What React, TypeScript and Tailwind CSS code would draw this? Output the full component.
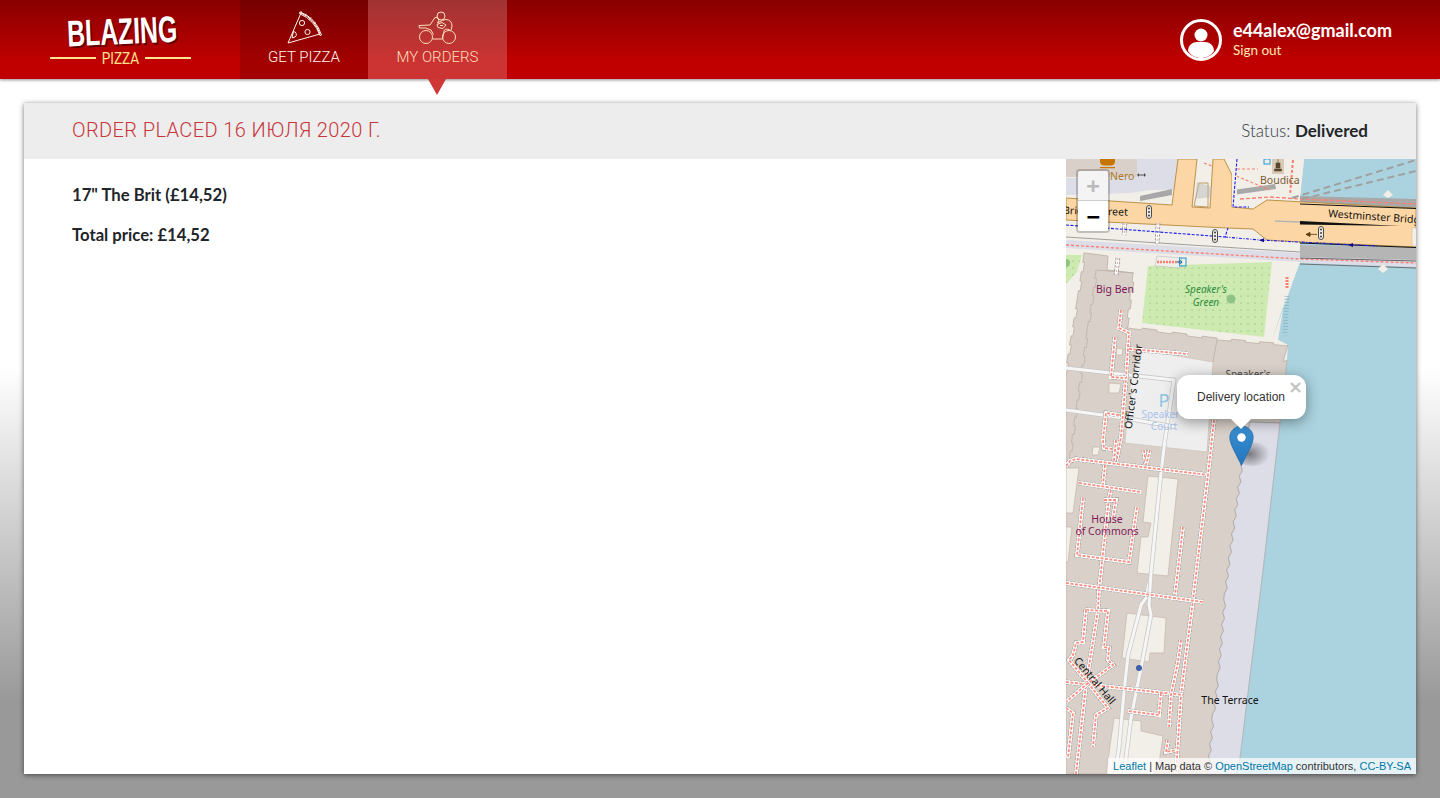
import React from "react";

type P = [number, number];

const pts = (a: P[]) => a.map((p) => p.join(",")).join(" ");

// a line broken into small bumps, as the traced outline of a wall
function bumpy(a: P[], step = 9, amp = 1.6, square = false): P[] {
  const out: P[] = [];
  for (let i = 0; i < a.length - 1; i++) {
    const [x1, y1] = a[i];
    const [x2, y2] = a[i + 1];
    const len = Math.hypot(x2 - x1, y2 - y1);
    const n = Math.max(1, Math.round(len / step));
    const nx = -(y2 - y1) / len;
    const ny = (x2 - x1) / len;
    for (let k = 0; k < n; k++) {
      const t = k / n;
      const t2 = (k + 1) / n;
      const o = k % 2 === 0 ? amp : -amp;
      out.push([x1 + (x2 - x1) * t + nx * o, y1 + (y2 - y1) * t + ny * o]);
      if (square) out.push([x1 + (x2 - x1) * t2 + nx * o, y1 + (y2 - y1) * t2 + ny * o]);
    }
  }
  out.push(a[a.length - 1]);
  return out;
}

const footways: P[][] = [
  [[1121, 310], [1119, 328], [1129, 333], [1126, 377], [1121, 437], [1116, 463]],
  [[1129, 349], [1188, 354]],
  [[1115, 337], [1111, 377], [1126, 378]],
  [[1119, 415], [1106, 413], [1103, 440], [1104, 448], [1112, 449]],
  [[1116, 440], [1114, 461]],
  [[1066, 466], [1070, 461], [1076, 459], [1208, 475]],
  [[1214, 420], [1208, 475], [1193, 600], [1181, 695], [1176, 774]],
  [[1105, 465], [1103, 485]],
  [[1079, 483], [1141, 492]],
  [[1111, 490], [1109, 498], [1099, 590], [1098, 610], [1086, 685], [1076, 774]],
  [[1083, 498], [1077, 555], [1129, 562], [1137, 507]],
  [[1104, 500], [1116, 500], [1113, 518]],
  [[1066, 583], [1203, 602]],
  [[1183, 527], [1175, 595]],
  [[1144, 450], [1146, 465]],
  [[1150, 450], [1146, 465]],
  [[1086, 610], [1108, 611], [1104, 647], [1109, 648], [1108, 660], [1113, 665], [1088, 683]],
  [[1086, 610], [1083, 642], [1076, 643], [1073, 655], [1069, 660], [1088, 683]],
  [[1066, 682], [1183, 695]],
  [[1088, 683], [1108, 708], [1096, 715], [1093, 747]],
  [[1088, 683], [1066, 702]],
  [[1066, 708], [1073, 713], [1068, 758]],
  [[1161, 693], [1159, 715], [1128, 711]],
  [[1181, 640], [1178, 662], [1171, 695], [1169, 727]],
  [[1168, 740], [1166, 752], [1176, 750]],
];

const service: P[][] = [
  [[1125, 223], [1124, 235]],
  [[1158, 223], [1157, 245]],
  [[1118, 258], [1116, 275]],
];

const corridors: P[][] = [
  [[1165, 440], [1161, 473], [1151, 573], [1146, 598], [1141, 605], [1128, 655], [1124, 692], [1119, 748], [1115, 774]],
  [[1151, 573], [1149, 605], [1151, 615], [1141, 668], [1131, 718], [1126, 758], [1124, 774]],
  [[1066, 368], [1174, 380], [1165, 440]],
  [[1066, 410], [1124, 418], [1176, 427]],
];

const courts: P[][] = [
  [[1148, 476], [1178, 479], [1168, 576], [1137, 573], [1141, 537], [1148, 537], [1151, 523], [1143, 522]],
  [[1066, 468], [1079, 468], [1073, 513], [1066, 513]],
  [[1066, 527], [1072, 527], [1068, 562], [1066, 562]],
  [[1093, 447], [1100, 447], [1098, 455], [1092, 455]],
  [[1109, 383], [1121, 384], [1119, 393], [1109, 393]],
  [[1117, 348], [1123, 349], [1122, 355], [1116, 355]],
  [[1127, 613], [1166, 618], [1164, 653], [1150, 653], [1149, 662], [1122, 658]],
  [[1114, 718], [1141, 721], [1141, 731], [1163, 736], [1159, 763], [1155, 774], [1106, 774]],
];

function Lights({ x, y }: { x: number; y: number }) {
  return (
    <g>
      <rect x={x - 2.5} y={y - 6.5} width="5" height="13" rx="2.5" fill="#f2efe9" stroke="#4a4a4a" strokeWidth="1" />
      <circle cx={x} cy={y - 3.5} r="1.1" fill="#4a4a4a" />
      <circle cx={x} cy={y} r="1.1" fill="#4a4a4a" />
      <circle cx={x} cy={y + 3.5} r="1.1" fill="#4a4a4a" />
    </g>
  );
}

function MapDrawing() {
  const wall: P[] = bumpy([[1242, 465], [1236, 510], [1228, 570], [1225, 600], [1218, 680], [1213, 720], [1208, 774]], 6, 1.2);
  const north: P[] = bumpy([[1127, 327], [1217, 339], [1288, 345]], 14, 0.9, true);
  const west: P[] = bumpy([[1085, 253], [1078, 300], [1066, 372]], 9, 0.9, true);
  const wing: P[] = bumpy([[1134, 273], [1127, 327]], 9, 0.9, true);
  const inner: P[] = bumpy([[1097, 270], [1088, 330], [1078, 400], [1070, 460]], 9, 0.9, true);
  const sans = "'Noto Sans', 'DejaVu Sans', sans-serif";
  return (
    <svg className="block w-full h-full" viewBox="1066 159 350 615" preserveAspectRatio="none">
      <defs>
        <pattern id="lawn" width="7" height="7" patternUnits="userSpaceOnUse">
          <rect width="7" height="7" fill="#cdebb0" />
          <circle cx="2" cy="2" r="0.5" fill="#5f9a5a" />
        </pattern>
      </defs>
      <rect x="1066" y="159" width="350" height="615" fill="#f2efe9" />

      {/* river */}
      <polygon
        fill="#aad3df"
        points={pts([[1304, 159], [1416, 159], [1416, 774], [1236, 774], [1240, 758], [1263, 570], [1280, 423], [1287, 360], [1288, 345], [1273, 337], [1287, 295], [1300, 262], [1300, 197]])}
      />
      <polygon fill="#f2efe9" points={pts([[1300, 262], [1291, 262], [1278, 340], [1272, 340]])} />

      {/* lawns */}
      <polygon fill="url(#lawn)" points={pts([[1148, 266], [1272, 262], [1264, 337], [1142, 323]])} />
      <polygon fill="url(#lawn)" points={pts([[1066, 255], [1082, 255], [1077, 272], [1066, 284]])} />
      <circle cx="1231" cy="299" r="4.5" fill="#8fc486" />
      <circle cx="1066" cy="263" r="4" fill="#8fc486" />

      {/* palace */}
      <polygon
        fill="#d9d0c9"
        stroke="#bcaea3"
        strokeWidth="0.8"
        points={pts([
          [1085, 253], [1108, 256], [1107, 270], ...wing, ...north, [1283, 362], [1287, 360], [1280, 423], [1250, 422], ...wall, [1066, 774], [1066, 372], ...west.slice().reverse(),
        ])}
      />
      <polyline points={pts([[1097, 270], [1134, 273]])} fill="none" stroke="#bcaea3" strokeWidth="0.8" />
      <polyline points={pts(inner)} fill="none" stroke="#bcaea3" strokeWidth="0.7" />
      <polyline points="1217,340 1213,362" fill="none" stroke="#bcaea3" strokeWidth="0.8" />
      {/* embankment */}
      <polygon fill="#dddde8" stroke="#9a9a9a" strokeWidth="0.6" points={pts([[1250, 422], [1280, 423], [1263, 570], [1240, 758], [1236, 774], [1208, 774], ...wall.slice().reverse()])} />
      <polygon fill="#eeeeee" stroke="#c9bdb2" strokeWidth="0.6" points={pts([[1143, 350], [1213, 362], [1207, 452], [1125, 443], [1131, 375]])} />
      {courts.map((c, i) => (
        <polygon key={i} fill="#f2efe9" stroke="#c4b6ab" strokeWidth="0.7" points={pts(c)} />
      ))}
      {corridors.map((c, i) => (
        <g key={i} fill="none">
          <polyline points={pts(c)} stroke="#c6c6c6" strokeWidth="4.4" />
          <polyline points={pts(c)} stroke="#f6f6f6" strokeWidth="3" />
        </g>
      ))}
      {footways.map((c, i) => (
        <g key={i} fill="none">
          <polyline points={pts(c)} stroke="#8a8a8a" strokeWidth="4.800" strokeDasharray="2.500 1.200" />
          <polyline points={pts(c)} stroke="#ffffff" strokeWidth="3.800" />
          <polyline points={pts(c)} stroke="#fb8d80" strokeWidth="1.800" strokeDasharray="3 1.500" />
        </g>
      ))}

      {/* north of the bridge */}
      <rect x="1066" y="159" width="71" height="18" fill="#d9d0c9" />
      <polygon fill="#dddde8" points={pts([[1137, 159], [1180, 159], [1176, 190], [1150, 190], [1130, 193], [1066, 195], [1066, 178], [1137, 177]])} />
      <polygon fill="#f2efe9" points={pts([[1237, 159], [1304, 159], [1300, 197], [1267, 200], [1253, 209], [1233, 207]])} />
      <polygon fill="#a8a8a8" points={pts([[1140, 196], [1172, 189], [1172, 195], [1140, 201]])} />
      <polygon fill="#a8a8a8" points={pts([[1233, 190], [1275, 184], [1276, 189], [1233, 195]])} />
      <polygon fill="#a8a8a8" points={pts([[1300, 196], [1416, 199], [1416, 208], [1300, 203]])} />
      <polyline points="1240,199 1270,197 1300,199 1416,204" fill="none" stroke="#fa8072" strokeWidth="1.4" strokeDasharray="4 2" />
      <polyline points="1292,198 1416,160" fill="none" stroke="#a0a0a0" strokeWidth="2" strokeDasharray="7 4" />
      <polyline points="1302,199 1416,171" fill="none" stroke="#a0a0a0" strokeWidth="2" strokeDasharray="7 4" />
      <polyline points="1204,163 1222,170 1270,190" fill="none" stroke="#fa8072" strokeWidth="1.2" strokeDasharray="3 2" />
      <polyline points="1293,160 1290,195" fill="none" stroke="#fa8072" strokeWidth="2" strokeDasharray="3 2" />
      <polyline points="1237,169 1258,169" fill="none" stroke="#fa8072" strokeWidth="1.2" strokeDasharray="3 2" />
      <polygon fill="#f2efe9" points={pts([[1388, 190], [1393, 195], [1388, 198], [1383, 195]])} />

      {/* below the road: pavement and rail */}
      <polygon fill="#dddde8" points={pts([[1066, 240], [1300, 253], [1300, 262], [1066, 248]])} />
      <polygon fill="#dddde8" points={pts([[1300, 255], [1416, 258], [1416, 267], [1300, 263]])} />
      <polygon fill="#b5b5b5" points={pts([[1300, 245], [1416, 247], [1416, 260], [1300, 257]])} />
      <polyline points="1066,237 1300,252" fill="none" stroke="#8a8a8a" strokeWidth="0.8" />
      <polyline points="1066,245 1300,259 1416,263" fill="none" stroke="#fa8072" strokeWidth="1.400" strokeDasharray="3 2" />
      <polyline points="1300,258 1416,261" fill="none" stroke="#444" strokeWidth="0.8" />
      <polyline points="1300,264 1416,268" fill="none" stroke="#6f6f6f" strokeWidth="1" />
      <polygon points="1157,256 1182,258 1181,268 1155,266" fill="#f2efe9" stroke="#bbb" strokeWidth="0.6" />
      <polyline points="1157,262 1180,262" fill="none" stroke="#fa8072" strokeWidth="2.600" strokeDasharray="2 1" />
      <rect x="1179.5" y="258" width="6.5" height="8" fill="none" stroke="#1d9ad6" strokeWidth="1" />
      <path d="M1177 262h5m-2-1.8l2 1.8-2 1.8" fill="none" stroke="#0f78a8" strokeWidth="1" />
      <polygon fill="#f2efe9" points={pts([[1383, 264], [1388, 269], [1383, 273], [1378, 269]])} />
      <polyline points="1287,277 1287,288" stroke="#fa8072" strokeWidth="3" strokeDasharray="2 1" />
      <polyline points="1287,296 1285,335" stroke="#7fa9b6" strokeWidth="5" strokeDasharray="1 2" opacity="0.6" />

      {/* road */}
      <polygon
        fill="#fcd6a4"
        stroke="#b4893c"
        strokeWidth="0.9"
        points={pts([
          [1066, 198], [1172, 205], [1178, 159], [1197, 159], [1192, 207], [1210, 208], [1213, 159], [1224, 159], [1232, 175], [1232, 207], [1253, 209], [1267, 200], [1416, 208], [1416, 247], [1300, 242], [1267, 240], [1253, 229], [1227, 228], [1066, 220],
        ])}
      />
      <polyline points="1300,204 1416,208.500" fill="none" stroke="#111" strokeWidth="1" />
      <polyline points="1300,243 1416,247.500" fill="none" stroke="#111" strokeWidth="1" />
      <polygon fill="#f2efe9" stroke="#b4893c" strokeWidth="0.8" points={pts([[1199, 183], [1208, 183], [1208, 207], [1194, 206]])} />
      <polygon fill="#b5b5b5" points={pts([[1197, 182], [1212, 187], [1211, 197], [1195, 199]])} opacity="0.45" />
      <polygon fill="#f2efe9" points={pts([[1232, 159], [1237, 159], [1237, 207], [1232, 207]])} />
      {service.map((c, i) => (
        <g key={i} fill="none">
          <polyline points={pts(c)} stroke="#8a8a8a" strokeWidth="4.500" strokeDasharray="2.500 1.200" />
          <polyline points={pts(c)} stroke="#ffffff" strokeWidth="3" />
          <polyline points={pts(c)} stroke="#e2b5ae" strokeWidth="1.200" strokeDasharray="2 2" />
        </g>
      ))}
      <polyline points="1237,159 1233,207 1249,207" fill="none" stroke="#1c1cf0" strokeWidth="1.100" strokeDasharray="3 1.5" />
      <polyline points="1066,225 1225,237 1228,228" fill="none" stroke="#1c1cf0" strokeWidth="1.100" strokeDasharray="3 1.5" />
      <polyline points="1225,237 1260,240 1377,246" fill="none" stroke="#1c1cf0" strokeWidth="1.100" strokeDasharray="3 1.5 1 1.5" />
      <path d="M1259 240.2l5-2v4zM1348 245l5-2v4z" fill="#0c0c8c" />
      <polygon points="1300,221 1400,226 1300,224.500" fill="#111" />
      <polyline points="1275,221 1300,222" stroke="#b5b5b5" strokeWidth="1.3" />
      <Lights x={1149} y={212} />
      <Lights x={1215} y={236} />
      <Lights x={1321} y={233} />
      <path d="M1306 234.4h11m-11 0l4-2v4z" fill="#5a3a10" stroke="#5a3a10" strokeWidth="0.8" />
      <rect x="1412" y="228" width="6" height="18" rx="1" fill="#f2efe9" stroke="#c9b08a" strokeWidth="0.5" />

      {/* points of interest */}
      <path d="M1100 159h15v3c0 2-2 3.400-4 3.400h-7c-2 0-4-1.400-4-3.400zM1100 167h15v1.200h-15z" fill="#c77400" />
      <rect x="1272" y="159" width="12" height="15" fill="#d8cab5" />
      <path d="M1278 159v4m-2 0h4v5h-4zm-1.500 6h7v2h-7z" fill="#5a4630" stroke="#5a4630" strokeWidth="0.6" />
      <path d="M1137 175h9m-7.500-1.500v3m6-3v3" stroke="#333" strokeWidth="0.8" />
      <rect x="1264" y="159" width="6" height="5" fill="#f2efe9" stroke="#1d9ad6" strokeWidth="1" />

      {/* labels */}
      <g fontFamily={sans} fontSize="10.500">
        <text x="1110" y="180" fill="#ac7a24">Nero</text>
        <text x="1260" y="184" fill="#7a5c34">Boudica</text>
        <text x="1096" y="293" fill="#7e1a58">Big Ben</text>
        <text x="1206" y="293" fill="#2c8c3c" fontStyle="italic" textAnchor="middle" fontSize="10">Speaker's</text>
        <text x="1206" y="306" fill="#2c8c3c" fontStyle="italic" textAnchor="middle" fontSize="10">Green</text>
        <text x="1164" y="407" fill="#8dc5e3" textAnchor="middle" fontSize="18">P</text>
        <text x="1164" y="418" fill="#a8c4ec" textAnchor="middle" fontSize="10">Speaker's</text>
        <text x="1164" y="430" fill="#a8c4ec" textAnchor="middle" fontSize="10">Court</text>
        <text x="1248" y="378" fill="#4a4a4a" textAnchor="middle" fontSize="10">Speaker's</text>
        <text x="1107" y="523" fill="#7e1a58" textAnchor="middle">House</text>
        <text x="1107" y="535" fill="#7e1a58" textAnchor="middle">of Commons</text>
        <text x="1230" y="704" fill="#111" textAnchor="middle">The Terrace</text>
        <text fill="#111" transform="translate(1063 214) rotate(1.500)">Bridge Street</text>
        <text fill="#111" transform="translate(1328 217) rotate(4)">Westminster Bridge</text>
        <text fill="#111" textAnchor="middle" transform="translate(1137 387) rotate(-83)">Officer's Corridor</text>
        <text fill="#111" textAnchor="middle" transform="translate(1092 683) rotate(50)">Central Hall</text>
      </g>
      <circle cx="1139" cy="668" r="3" fill="#3f5ea8" />
    </svg>
  );
}

function PizzaIcon() {
  return (
    <svg width="36" height="36" viewBox="0 0 36 36" fill="none" stroke="currentColor" strokeWidth="1" strokeLinejoin="round">
      <path d="M2 33 L15 3 Q29 9 34 24 Z" />
      <path d="M14 1.800 Q30 8 35.500 25 L34 25.500 Q28.500 10 13.400 3.500 Z" />
      <path d="M15.500 1.500 L15 3.500 M20 3.800 L19 6 M25 7.500 L23.500 9.500 M29.500 12.500 L28 14 M33 18 L31 19.200" />
      <circle cx="16" cy="13" r="2.600" />
      <circle cx="21.500" cy="22" r="2.600" />
      <path d="M7.500 21.500 A3 3 0 0 1 9 27 L6 27.800 Z" />
    </svg>
  );
}

function BikeIcon() {
  return (
    <svg width="40" height="36" viewBox="0 0 40 36" fill="none" stroke="currentColor" strokeWidth="1">
      <circle cx="8" cy="27" r="6.500" />
      <circle cx="31" cy="27" r="6.500" />
      <circle cx="23" cy="6" r="4" />
      <path d="M14.500 29h10" />
      <path d="M1.500 18 L1 15.500 L12 15 L17 7.500 Q19 6 21 10 L19.500 13 Q25 9.500 28 9.500 Q34 10 34 16 L33 20.500" />
      <path d="M1.500 18 Q8 17 13 20 L15.500 24.500 M24.500 29 L26 21 Q26.500 18 32 20" />
      <path d="M19 14.500l5-2 4 2.500-3 3.500-5-1z" />
      <path d="M22 15.500h3" />
    </svg>
  );
}

function UserIcon() {
  return (
    <svg width="44" height="44" viewBox="0 0 44 44">
      <circle cx="22" cy="22" r="19.500" fill="none" stroke="#ffffff" strokeWidth="3" />
      <circle cx="22" cy="17" r="6.500" fill="#ffffff" />
      <path d="M9 33 C9 27 14 24 18 24 H26 C30 24 35 27 35 33 C31.500 38 27 40 22 40 C17 40 12.500 38 9 33Z" fill="#ffffff" />
    </svg>
  );
}

const ui = "font-['Lato','Noto_Sans',sans-serif]";

export default function App() {
  return (
    <div className={`h-screen min-h-[798px] flex flex-col bg-[linear-gradient(to_bottom,#ffffff_46%,#999999_88%)] ${ui}`}>
      <header className="relative z-10 h-[79px] flex bg-[linear-gradient(to_bottom,#8a0000,#c00000_78%)] shadow-[0_1px_3px_rgba(0,0,0,0.45)]">
        <div className="w-[240px] flex flex-col items-center pt-[14px]">
          <div className="-rotate-[2.5deg] translate-x-[2px] scale-x-[0.67] font-['Liberation_Sans',sans-serif] font-bold text-[37px] leading-[36px] whitespace-nowrap text-white [text-shadow:2px_2px_0_rgba(70,0,0,0.75)]">
            BLAZING
          </div>
          <div className="flex items-center gap-[5px] mt-[-1px] text-[#ffe38f]">
            <span className="w-[46px] h-[2px] bg-[#ffe38f]" />
            <span className="w-[39px] flex justify-center">
              <span className="inline-block scale-x-[0.8] font-['Roboto',sans-serif] text-[17px] leading-[18px]">PIZZA</span>
            </span>
            <span className="w-[46px] h-[2px] bg-[#ffe38f]" />
          </div>
        </div>
        <nav className="flex">
          <a className="w-[128px] flex flex-col items-center pt-[10px] bg-black/15 text-[#fff4ec]">
            <PizzaIcon />
            <span className="mt-[1px] text-[15px] leading-[20px] font-light font-['Roboto',sans-serif]">GET PIZZA</span>
          </a>
          <a className="relative w-[139px] flex flex-col items-center pt-[10px] bg-white/20 text-[#ffdfba]">
            <BikeIcon />
            <span className="mt-[1px] text-[15px] leading-[20px] font-light font-['Roboto',sans-serif]">MY ORDERS</span>
            <span className="absolute left-[60px] top-full w-0 h-0 border-x-[9px] border-x-transparent border-t-[16px] border-t-[#cf3737]" />
          </a>
        </nav>
        <div className="ml-auto pr-[48px] flex items-center gap-[10px]">
          <UserIcon />
          <div className="flex flex-col">
            <span className="text-white font-bold text-[18px] leading-[20px]">e44alex@gmail.com</span>
            <span className="text-[#ffe9b5] text-[13.5px] leading-[20px]">Sign out</span>
          </div>
        </div>
      </header>

      <main className="flex-1 flex flex-col p-6 min-h-0">
        <section className="flex-1 flex flex-col bg-white shadow-[0_1px_5px_rgba(0,0,0,0.55)] min-h-0">
          <div className="h-14 shrink-0 flex items-center justify-between bg-[#ededed] pl-12 pr-12">
            <h1 className="pb-[2px] font-['Roboto',sans-serif] font-light text-[20px] tracking-[0.4px] text-[#c8353a] uppercase">
              Order placed 16 июля 2020 г.
            </h1>
            <div className="text-[17px] text-[#333a40]">
              <span className="font-light">Status: </span>
              <strong className="font-bold text-[#212529]">Delivered</strong>
            </div>
          </div>
          <div className="flex-1 flex min-h-0">
            <div className="flex-1 pl-12 pt-[26px] text-[16.700px] font-bold text-[#212529]">
              <p className="leading-[20px]">17" The Brit (£14,52)</p>
              <p className="leading-[20px] mt-[20px]">Total price: £14,52</p>
            </div>
            <div className="relative w-[350px] shrink-0 overflow-hidden font-['Liberation_Sans',sans-serif]">
              <MapDrawing />

              <div className="absolute left-[10px] top-[10px] w-[34px] rounded-[4px] border-2 border-black/20 bg-clip-padding">
                <div className="h-[30px] flex items-center justify-center bg-[#f4f4f4] rounded-t-[2px] border-b border-[#cccccc] text-[#bbbbbb] font-bold text-[22px] font-['DejaVu_Sans_Mono',monospace]">+</div>
                <div className="h-[30px] flex items-center justify-center bg-white rounded-b-[2px] text-black font-bold text-[22px] font-['DejaVu_Sans_Mono',monospace]">−</div>
              </div>

              {/* marker */}
              <svg className="absolute left-[163px] top-[266px]" width="50" height="42" viewBox="0 0 50 42">
                <defs>
                  <linearGradient id="pin" x1="0" y1="0" x2="0" y2="1">
                    <stop offset="0" stopColor="#3a8fce" />
                    <stop offset="1" stopColor="#2176c0" />
                  </linearGradient>
                  <radialGradient id="pinShade" cx="0.4" cy="0.5" r="0.6">
                    <stop offset="0" stopColor="#000" stopOpacity="0.45" />
                    <stop offset="1" stopColor="#000" stopOpacity="0" />
                  </radialGradient>
                </defs>
                <ellipse cx="24" cy="29" rx="17" ry="12" fill="url(#pinShade)" />
                <path d="M12.500 1 C5.800 1 .8 6.300 .8 12.500 C.8 20 8.500 31 12.500 40.500 C16.500 31 24.200 20 24.200 12.500 C24.200 6.300 19.200 1 12.500 1Z" fill="url(#pin)" stroke="#2a6fa6" strokeWidth="0.8" />
                <circle cx="12.500" cy="12.500" r="4.200" fill="#ffffff" />
              </svg>

              {/* popup */}
              <div className="absolute left-[111px] top-[216px] w-[129px] h-[44px] pr-[1px] rounded-[12px] bg-white shadow-[0_3px_14px_rgba(0,0,0,0.4)] flex items-center justify-center text-[12px] text-[#333333]">
                Delivery location
                <span className="absolute right-[3px] top-[4px] text-[#c3c3c3] font-bold text-[18px] leading-[16px] font-['DejaVu_Sans',sans-serif]">×</span>
                <span className="absolute left-[54px] top-full w-0 h-0 border-x-[10px] border-x-transparent border-t-[10px] border-t-white" />
              </div>

              <div className="absolute right-0 bottom-0 px-[5px] h-[16px] leading-[16px] text-[11px] bg-white/70 text-[#333333] whitespace-nowrap">
                <a className="text-[#0078a8]">Leaflet</a> | Map data © <a className="text-[#0078a8]">OpenStreetMap</a> contributors, <a className="text-[#0078a8]">CC-BY-SA</a>
              </div>
            </div>
          </div>
        </section>
      </main>
    </div>
  );
}
